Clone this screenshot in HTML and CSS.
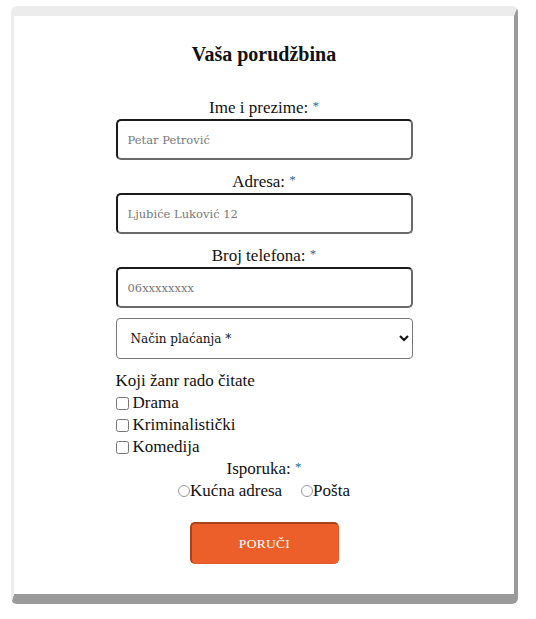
FILE: index.html
```html
<!DOCTYPE html>
<html lang="sr">
<head>
<meta charset="utf-8">
<title>Vaša porudžbina</title>
<link rel="stylesheet" href="styles.css">
</head>
<body>
<div class="card">
  <h2 class="title">Vaša porudžbina</h2>
  <form class="form">
    <label class="field-label">Ime i prezime: <span class="req">*</span></label>
    <input class="text-input" type="text" placeholder="Petar Petrović">
    <label class="field-label">Adresa: <span class="req">*</span></label>
    <input class="text-input" type="text" placeholder="Ljubiće Luković 12">
    <label class="field-label">Broj telefona: <span class="req">*</span></label>
    <input class="text-input" type="text" placeholder="06xxxxxxxx">
    <select class="select-input">
      <option>Način plaćanja *</option>
    </select>
    <div class="genres">
      <div class="line">Koji žanr rado čitate</div>
      <label class="line check"><input type="checkbox" class="cb">Drama</label>
      <label class="line check"><input type="checkbox" class="cb">Kriminalistički</label>
      <label class="line check"><input type="checkbox" class="cb">Komedija</label>
    </div>
    <div class="delivery-label">Isporuka: <span class="req">*</span></div>
    <div class="radios">
      <label class="radio-item"><input type="radio" name="isp" class="rb">Kućna adresa</label>
      <label class="radio-item"><input type="radio" name="isp" class="rb rb-second">Pošta</label>
    </div>
    <button type="button" class="submit">PORUČI</button>
  </form>
</div>
</body>
</html>
```

FILE: styles.css
```css
html, body {
  margin: 0;
  padding: 0;
  background: #ffffff;
}
body {
  font-family: "Liberation Serif", "Times New Roman", serif;
  font-size: 17px;
  color: #111;
}
.card {
  box-sizing: border-box;
  width: 507px;
  height: 598px;
  margin: 6px 0 0 11px;
  background: #fff;
  border-style: solid;
  border-width: 10px 4px 10px 3px;
  border-color: #ececec #9a9a9a #9a9a9a #ececec;
  border-radius: 6px;
}
.title {
  margin: 26px 0 0;
  text-align: center;
  font-size: 20px;
  line-height: 24px;
  font-weight: bold;
  color: #111;
}
.form {
  width: 297px;
  margin: 30px auto 0;
  display: flex;
  flex-direction: column;
}
.field-label {
  display: block;
  text-align: center;
  height: 23px;
  line-height: 23px;
  font-size: 17px;
}
.req {
  color: #2a6a8a;
  font-size: 13px;
  line-height: 1;
  vertical-align: 3px;
}
.text-input {
  box-sizing: border-box;
  width: 297px;
  height: 41px;
  margin: 0 0 10px;
  padding: 0 10px;
  border-style: solid;
  border-width: 2px;
  border-color: #1c1c1c #6a6a6a #6a6a6a #1c1c1c;
  border-radius: 5px;
  font-family: "DejaVu Serif", "Liberation Serif", serif;
  font-size: 11.5px;
  background: #fff;
}
.text-input::placeholder {
  color: #777;
}
.select-input {
  box-sizing: border-box;
  width: 297px;
  height: 41px;
  margin: 0;
  padding: 0 8px 0 10px;
  border: 1px solid #777;
  border-radius: 4px;
  background: #fff;
  font-family: "DejaVu Serif", "Liberation Serif", serif;
  font-size: 12px;
  color: #111;
}
.genres {
  margin-top: 11px;
  display: flex;
  flex-direction: column;
}
.line {
  line-height: 22px;
  height: 22px;
  display: flex;
  align-items: center;
}
.cb {
  width: 13px;
  height: 13px;
  margin: 0 4px 0 0;
}
.delivery-label {
  text-align: center;
  height: 21px;
  line-height: 21px;
}
.radios {
  display: flex;
  justify-content: center;
  height: 23px;
  line-height: 23px;
}
.radio-item {
  display: flex;
  align-items: center;
}
.rb {
  width: 12px;
  height: 12px;
  margin: 0;
  opacity: 0.75;
}
.rb-second {
  margin-left: 19px;
}
.submit {
  align-self: center;
  box-sizing: border-box;
  width: 149px;
  height: 42px;
  margin-top: 20px;
  background: #ec5f2a;
  color: #fff;
  border-style: solid;
  border-width: 2px 1px 1px 2px;
  border-color: #a8431c #e05a28 #e05a28 #a8431c;
  border-radius: 5px;
  font-family: "Liberation Serif", serif;
  font-size: 13.5px;
  letter-spacing: 0.3px;
  cursor: pointer;
}
```
